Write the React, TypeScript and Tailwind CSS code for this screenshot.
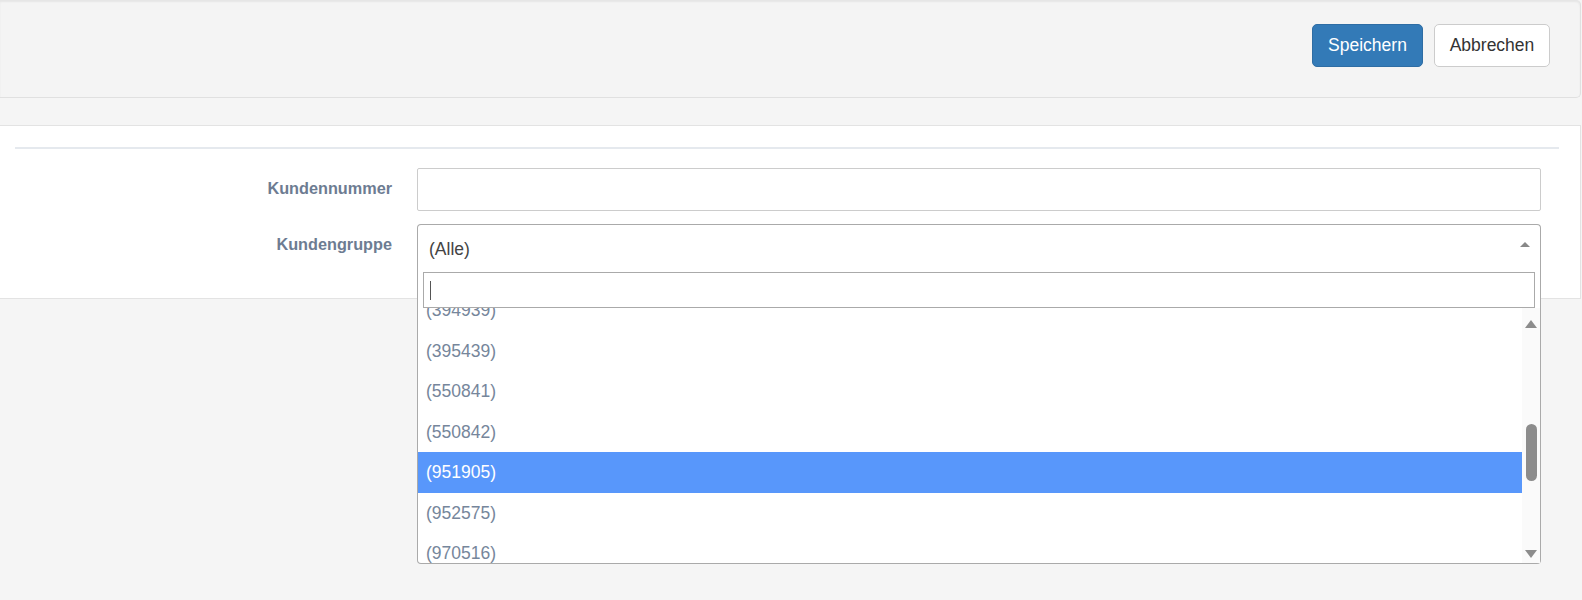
import React from 'react';

const groups = ['(394939)', '(395439)', '(550841)', '(550842)', '(951905)', '(952575)', '(970516)', '(981120)'];

export default function App() {
  const selected = '(951905)';

  return (
    <div className="min-h-[600px] bg-[#f5f5f5] font-['Liberation_Sans',Arial,sans-serif]">
      {/* toolbar */}
      <div className="h-[98px] mr-[1px] bg-[#f4f4f4] border-b border-r border-[#e0e0e0] rounded-br-[5px] rounded-tr-[5px] shadow-[inset_0_2px_2px_rgba(0,0,0,0.06)] flex justify-end items-start pt-[24px] pr-[30px] gap-[11px]">
        <button className="h-[43px] w-[111px] rounded-[5px] bg-[#337ab7] border border-[#2e6da4] text-white text-[17.5px]">
          Speichern
        </button>
        <button className="h-[43px] w-[116px] rounded-[5px] bg-white border border-[#cccccc] text-[#333333] text-[17.5px]">
          Abbrechen
        </button>
      </div>

      {/* form panel */}
      <div className="mt-[27px] mr-[1px] bg-white border-t border-b border-r border-[#e3e3e3] pl-[15px] pr-[21px] pt-[21px] pb-[31px]">
        <div className="h-[2px] bg-[#e5e9ee]" />

        <div className="mt-[19px] mr-[18px] flex items-start">
          <label className="w-[377px] text-right text-[16.25px] font-bold text-[#6d7c92] leading-[22px] pt-[9px]">
            Kundennummer
          </label>
          <input className="ml-[25px] flex-1 h-[43px] border border-[#cccccc] rounded-[2px] bg-white outline-none" />
        </div>

        <div className="mt-[13px] mr-[18px] flex items-start">
          <label className="w-[377px] text-right text-[16.25px] font-bold text-[#6d7c92] leading-[22px] pt-[9px]">
            Kundengruppe
          </label>
          <div className="ml-[25px] flex-1 relative">
            <div className="h-[43px] border border-b-0 border-[#aaaaaa] rounded-t-[4px] bg-white flex items-center pl-[11px] pr-[10px]">
              <span className="text-[17.5px] text-[#444444] flex-1 pt-[7px]">(Alle)</span>
              <span className="w-0 h-0 border-x-[5px] border-x-transparent border-b-[5px] border-b-[#888888] mt-[-4px]" />
            </div>

            {/* open dropdown */}
            <div className="absolute left-0 right-0 top-full z-10 bg-white border border-t-0 border-[#aaaaaa] rounded-b-[4px]">
              <div className="px-[5px] pt-[5px]">
                <div className="h-[36px] border border-[#aaaaaa] flex items-center pl-[6px]">
                  <span className="w-[1px] h-[19px] bg-[#555555]" />
                </div>
              </div>
              <div className="flex h-[255px]">
                <div className="flex-1 overflow-hidden">
                  <div className="mt-[-18px]">
                    {groups.map((g) => (
                      <div
                        key={g}
                        className={
                          g === selected
                            ? 'h-[40.5px] flex items-center pl-[8px] text-[17.5px] bg-[#5897fb] text-white'
                            : 'h-[40.5px] flex items-center pl-[8px] text-[17.5px] text-[#76869b]'
                        }
                      >
                        {g}
                      </div>
                    ))}
                  </div>
                </div>
                {/* scrollbar */}
                <div className="w-[18px] bg-[#fafafa] flex flex-col items-center pt-[12px] pb-[5px]">
                  <span className="w-0 h-0 border-x-[6px] border-x-transparent border-b-[8px] border-b-[#8c8c8c]" />
                  <div className="mt-[96px] w-[11px] h-[57px] rounded-full bg-[#8c8c8c]" />
                  <div className="flex-1" />
                  <span className="w-0 h-0 border-x-[6px] border-x-transparent border-t-[8px] border-t-[#8c8c8c]" />
                </div>
              </div>
            </div>
          </div>
        </div>
      </div>
    </div>
  );
}
